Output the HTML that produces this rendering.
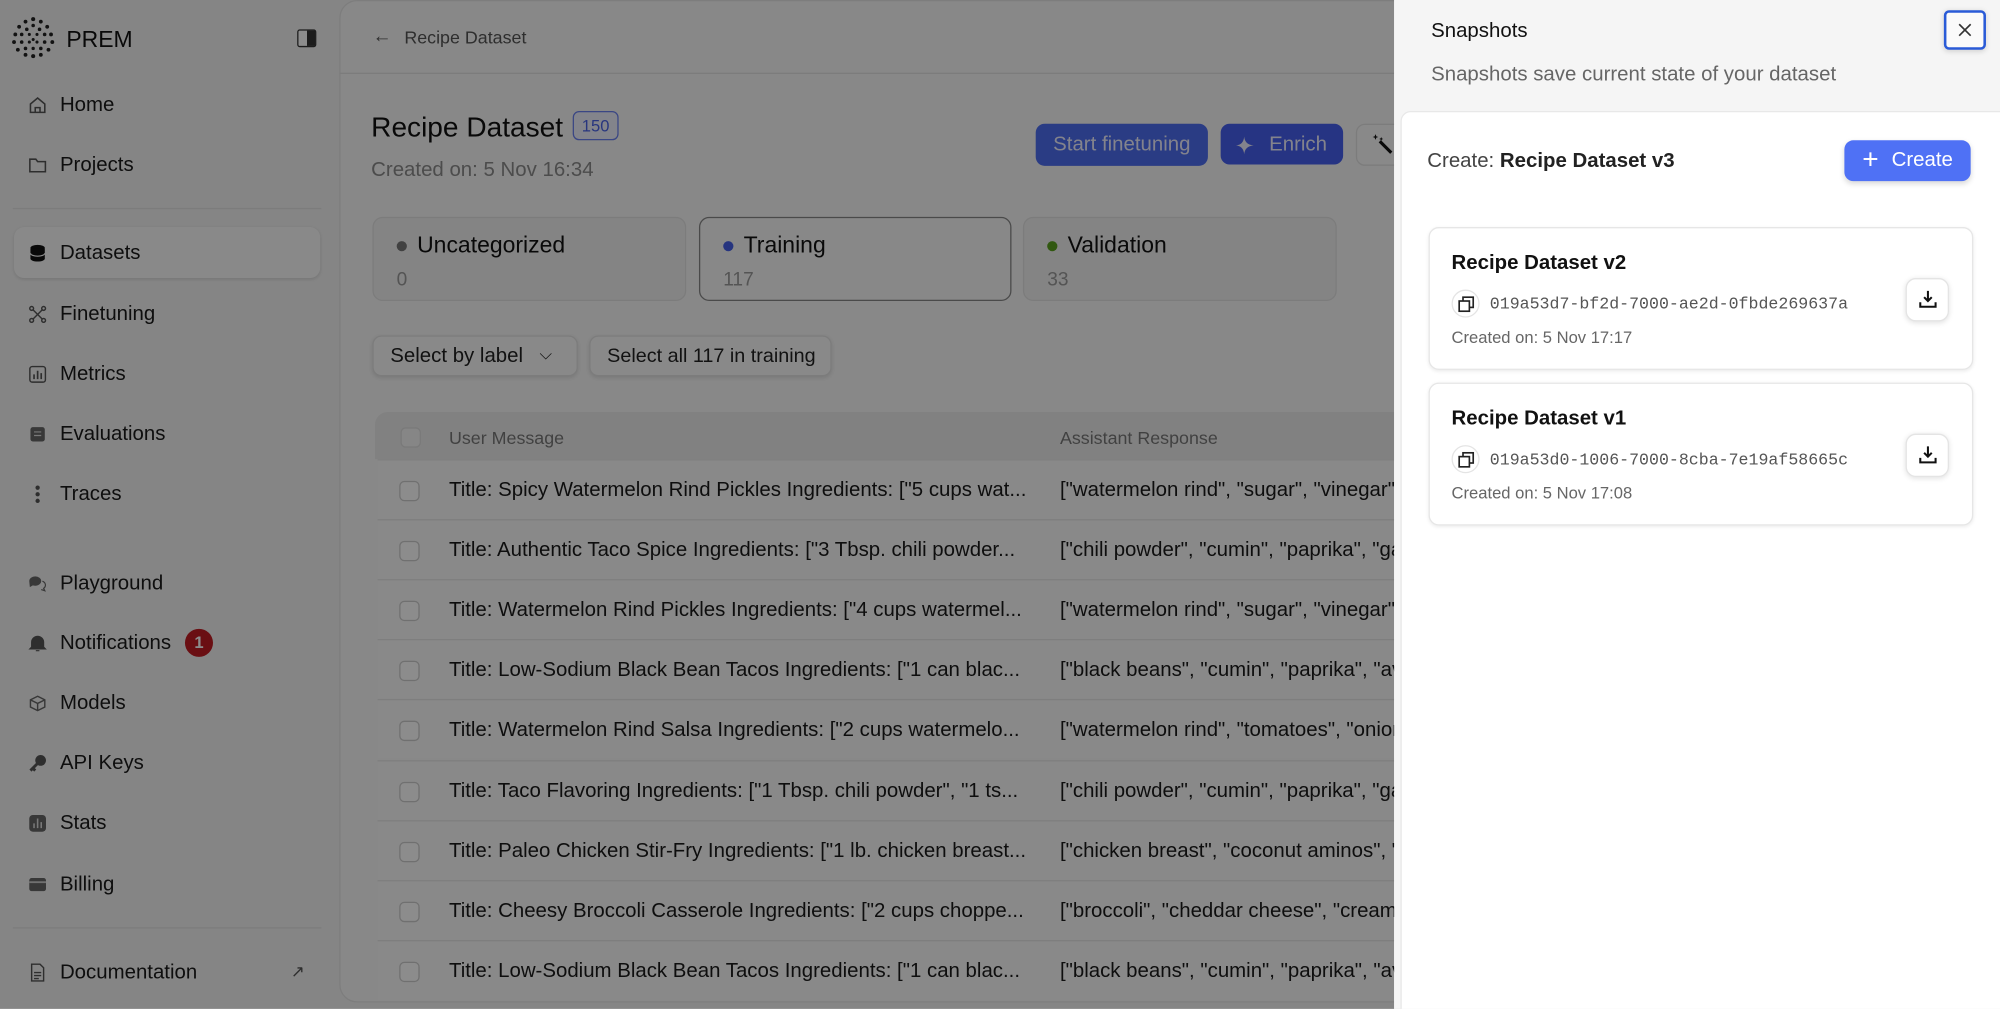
<!DOCTYPE html>
<html><head><meta charset="utf-8"><style>
*{box-sizing:border-box;margin:0;padding:0}
html,body{width:2000px;height:1009px;overflow:hidden;background:#7c7c7c}
#w{position:absolute;left:0;top:0;width:1568px;height:791px;transform:scale(1.27551);transform-origin:0 0;font-family:"Liberation Sans",sans-serif;background:#f3f3f3;overflow:hidden}
.a{position:absolute;white-space:nowrap}
.nav{position:absolute;left:47px;font-size:16px;color:#1a1a1a;margin-top:2px}
.ic{position:absolute;left:22px;width:15px;height:15px;margin-top:2px}
.main{position:absolute;left:266px;top:0;width:1400px;height:786px;background:#f7f7f7;border:1px solid #e4e4e4;border-radius:14px}
.card{position:absolute;top:170px;height:66px;border:1px solid #e2e2e2;border-radius:8px;background:#f0f0f0}
.card .t{position:absolute;left:34px;top:11px;font-size:18px;color:#111}
.card .n{position:absolute;left:18px;top:40px;font-size:15px;color:#999}
.card .d{position:absolute;left:18px;top:18px;width:8px;height:8px;border-radius:50%}
.btn{position:absolute;top:263px;height:32px;border:1px solid #e2e2e2;border-radius:7px;background:#fafafa;font-size:16px;color:#222;padding:7px 13px;box-shadow:0 1px 3px rgba(0,0,0,.1);white-space:nowrap}
.row{position:absolute;left:296px;width:1000px;height:47px;border-top:1px solid #e6e6e6;background:#f9f9f9}
.row .cb,.hd .cb{position:absolute;left:17px;top:16px;width:16px;height:16px;border:1px solid #ccc;border-radius:4px;background:#fff}
.row .u{position:absolute;left:56px;top:15px;font-size:16px;color:#1a1a1a;white-space:nowrap}
.row .r{position:absolute;left:535px;top:15px;font-size:16px;color:#1a1a1a;white-space:nowrap}
#ov{position:absolute;left:0;top:0;width:1093px;height:791px;background:rgba(0,0,0,.45)}
#p{position:absolute;left:1093px;top:0;width:475px;height:791px;background:#f5f5f5}
#in{position:absolute;left:5px;top:87px;width:480px;height:720px;background:#fff;border:1px solid #e8e8e8;border-radius:8px}
.sc{position:absolute;left:21px;width:427px;height:112px;border:1px solid #e6e6e6;border-radius:8px;background:#fff;box-shadow:0 1px 3px rgba(0,0,0,.08)}
.sc .t{position:absolute;left:17px;top:19px;font-size:16px;font-weight:bold;color:#111}
.sc .cp{position:absolute;left:17px;top:48px;width:22px;height:22px;border:1px solid #e4e4e4;border-radius:50%}
.sc .id{position:absolute;left:47px;top:52px;font-family:"Liberation Mono",monospace;font-size:13px;color:#555}
.sc .c{position:absolute;left:17px;top:78px;font-size:13px;color:#666}
.sc .dl{position:absolute;left:373px;top:39px;width:34px;height:34px;border:1px solid #e4e4e4;border-radius:8px;box-shadow:0 1px 4px rgba(0,0,0,.12);background:#fff}
</style></head><body><div id="w">
<svg class="a" style="left:9px;top:13px" width="34" height="34" viewBox="0 0 34 34"><g fill="#222">
<circle cx="17" cy="2" r="1.6"/><circle cx="11" cy="4" r="1.5"/><circle cx="23" cy="4" r="1.5"/><circle cx="6" cy="8" r="1.5"/><circle cx="28" cy="8" r="1.5"/><circle cx="17" cy="7" r="1.4"/><circle cx="12" cy="10" r="1.4"/><circle cx="22" cy="10" r="1.4"/><circle cx="3" cy="14" r="1.5"/><circle cx="31" cy="14" r="1.5"/><circle cx="8" cy="14" r="1.4"/><circle cx="26" cy="14" r="1.4"/><circle cx="14" cy="14" r="1.2"/><circle cx="20" cy="14" r="1.2"/><circle cx="2" cy="20" r="1.5"/><circle cx="32" cy="20" r="1.5"/><circle cx="8" cy="20" r="1.4"/><circle cx="26" cy="20" r="1.4"/><circle cx="14" cy="20" r="1.2"/><circle cx="20" cy="20" r="1.2"/><circle cx="5" cy="26" r="1.5"/><circle cx="29" cy="26" r="1.5"/><circle cx="11" cy="25" r="1.4"/><circle cx="23" cy="25" r="1.4"/><circle cx="17" cy="25" r="1.3"/><circle cx="11" cy="30" r="1.5"/><circle cx="23" cy="30" r="1.5"/><circle cx="17" cy="31" r="1.6"/><circle cx="17" cy="18" r="1.2"/></g></svg>
<div class="a" style="left:52px;top:21px;font-size:18px;color:#111">PREM</div>
<div class="a" style="left:233px;top:23px;width:15px;height:14px;border:1.5px solid #333;border-radius:2px;background:linear-gradient(90deg,#fff 50%,#333 50%)"></div>
<svg class="ic" style="top:73px" viewBox="0 0 16 16"><path d="M2 7L8 2l6 5v7H2z M6 14V10h4v4" fill="none" stroke="#555" stroke-width="1.3"/></svg><div class="nav" style="top:72px">Home</div>
<svg class="ic" style="top:120px" viewBox="0 0 16 16"><path d="M1.5 3h5l1.5 2h6.5v8.5h-13z" fill="none" stroke="#555" stroke-width="1.3"/></svg><div class="nav" style="top:119px">Projects</div>
<div class="a" style="left:10px;top:163px;width:242px;height:1px;background:#e2e2e2"></div>
<div class="a" style="left:11px;top:178px;width:240px;height:40px;background:#fafafa;border-radius:8px;box-shadow:0 1px 3px rgba(0,0,0,.12)"></div>
<svg class="ic" style="top:189px" viewBox="0 0 16 16"><ellipse cx="8" cy="3.5" rx="6" ry="2.5" fill="#111"/><path d="M2 4v8.5c0 1.4 2.7 2.5 6 2.5s6-1.1 6-2.5V4" fill="#111"/><path d="M2 8c0 1.4 2.7 2.5 6 2.5S14 9.4 14 8" stroke="#fff" fill="none"/></svg><div class="nav" style="top:188px">Datasets</div>
<svg class="ic" style="top:237px" viewBox="0 0 16 16"><g fill="none" stroke="#555" stroke-width="1.2"><circle cx="3" cy="3" r="1.6"/><circle cx="13" cy="3" r="1.6"/><circle cx="3" cy="13" r="1.6"/><circle cx="13" cy="13" r="1.6"/><path d="M4 4l8 8M12 4l-8 8"/></g></svg><div class="nav" style="top:236px">Finetuning</div>
<svg class="ic" style="top:284px" viewBox="0 0 16 16"><rect x="1.5" y="1.5" width="13" height="13" rx="2" fill="none" stroke="#555" stroke-width="1.2"/><path d="M5 12V8M8 12V5M11 12V7" stroke="#555" stroke-width="1.4"/></svg><div class="nav" style="top:283px">Metrics</div>
<svg class="ic" style="top:331px" viewBox="0 0 16 16"><rect x="2" y="2" width="12" height="12" rx="2" fill="#666"/><path d="M5 6h6M5 9h6" stroke="#ddd"/></svg><div class="nav" style="top:330px">Evaluations</div>
<svg class="ic" style="top:378px" viewBox="0 0 16 16"><circle cx="8" cy="2.5" r="1.8" fill="#555"/><circle cx="8" cy="8" r="1.8" fill="#555"/><circle cx="8" cy="13.5" r="1.8" fill="#555"/></svg><div class="nav" style="top:377px">Traces</div>
<svg class="ic" style="top:448px" viewBox="0 0 16 16"><path d="M1 6a5 4 0 0 1 10 0a5 4 0 0 1-7 3.5L1.5 11z" fill="#666"/><path d="M12 6a4 3.5 0 0 1 1 6l1 2-3-1" fill="none" stroke="#666"/></svg><div class="nav" style="top:447px">Playground</div>
<svg class="ic" style="top:495px" viewBox="0 0 16 16"><path d="M3 11V7a5 5 0 0 1 10 0v4l1.5 1.5h-13z M6.5 14h3" fill="#555" stroke="#555"/></svg><div class="nav" style="top:494px">Notifications</div>
<div class="a" style="left:145px;top:493px;width:22px;height:22px;border-radius:50%;background:#c21d24;color:#fff;font-size:13px;font-weight:bold;text-align:center;line-height:22px">1</div>
<svg class="ic" style="top:542px" viewBox="0 0 16 16"><path d="M8 2l6 3v6l-6 3-6-3V5z M2 5l6 3 6-3M8 8v6" fill="none" stroke="#666" stroke-width="1.2"/></svg><div class="nav" style="top:541px">Models</div>
<svg class="ic" style="top:589px" viewBox="0 0 16 16"><circle cx="10.5" cy="5.5" r="4.5" fill="#555"/><path d="M8 8l-6 6M4 12l2 2" stroke="#555" stroke-width="2.4"/></svg><div class="nav" style="top:588px">API Keys</div>
<svg class="ic" style="top:636px" viewBox="0 0 16 16"><rect x="1" y="1" width="14" height="14" rx="3" fill="#666"/><path d="M5 12V8M8 12V4M11 12V7" stroke="#ddd" stroke-width="1.3"/></svg><div class="nav" style="top:635px">Stats</div>
<svg class="ic" style="top:684px" viewBox="0 0 16 16"><rect x="1" y="2.5" width="14" height="11" rx="2" fill="#666"/><path d="M1 6h14" stroke="#ccc" stroke-width="1.5"/></svg><div class="nav" style="top:683px">Billing</div>
<div class="a" style="left:10px;top:727px;width:242px;height:1px;background:#e2e2e2"></div>
<svg class="ic" style="top:753px" viewBox="0 0 16 16"><path d="M3 1h7l3 3v11H3z M5 8h6M5 10.5h6M5 13h4" fill="none" stroke="#555" stroke-width="1.2"/></svg><div class="nav" style="top:752px">Documentation</div>
<div class="a" style="left:228px;top:754px;font-size:13px;color:#555">↗</div>
<div class="main"></div>
<div class="a" style="left:266px;top:57px;width:1000px;height:1px;background:#e2e2e2"></div>
<div class="a" style="left:292px;top:20px;font-size:15px;color:#555">←</div>
<div class="a" style="left:317px;top:21px;font-size:14px;color:#555">Recipe Dataset</div>
<div class="a" style="left:291px;top:87px;font-size:22px;color:#111">Recipe Dataset</div>
<div class="a" style="left:449px;top:87px;width:36px;height:23px;border:1px solid #6b80f0;border-radius:5px;background:#eef1fe;color:#4a63e6;font-size:13px;text-align:center;line-height:21px">150</div>
<div class="a" style="left:291px;top:125px;font-size:16px;color:#8a8a8a">Created on: 5 Nov 16:34</div>
<div class="a" style="left:812px;top:97px;width:135px;height:33px;border-radius:7px;background:#4d6df0;color:#eef;font-size:16px;text-align:center;line-height:33px">Start finetuning</div>
<div class="a" style="left:957px;top:97px;width:96px;height:32px;border-radius:7px;background:#4660ef;color:#eef;font-size:16px;line-height:33px;padding-left:38px">Enrich</div>
<svg class="a" style="left:968px;top:105px" width="17" height="17" viewBox="0 0 16 16"><path d="M7 2Q7.5 8 14 8.5Q7.5 9 7 15Q6.5 9 1 8.5Q6.5 8 7 2z" fill="#eef"/></svg>
<div class="a" style="left:1063px;top:97px;width:40px;height:33px;border-radius:7px;background:#fafafa;border:1px solid #e2e2e2"></div>
<svg class="a" style="left:1075px;top:104px" width="18" height="18" viewBox="0 0 16 16"><path d="M6 6l8 8" stroke="#111" stroke-width="2.2"/><path d="M3 1l.6 1.6L5 3l-1.4.5L3 5l-.6-1.5L1 3l1.4-.4z M7 3l.4 1 1 .4-1 .4L7 6l-.4-1.2-1-.4 1-.4z" fill="#111"/></svg>
<div class="card" style="left:292px;width:246px"><div class="d" style="background:#777"></div><div class="t">Uncategorized</div><div class="n">0</div></div>
<div class="card" style="left:548px;width:245px;border:1.5px solid #888;background:#f8f8f8"><div class="d" style="background:#4560e8"></div><div class="t">Training</div><div class="n">117</div></div>
<div class="card" style="left:802px;width:246px"><div class="d" style="background:#5aa01e"></div><div class="t">Validation</div><div class="n">33</div></div>
<div class="btn" style="left:292px;width:161px">Select by label <span style="position:absolute;left:130px;top:6px;font-size:13px">⌵</span></div>
<div class="btn" style="left:462px;width:190px;font-size:15.5px">Select all 117 in training</div>
<div class="a hd" style="left:294px;top:323px;width:1000px;height:37px;background:#ececec;border-radius:10px 0 0 0"><div class="cb" style="left:20px;top:12px;background:#f4f4f4;border-color:#ddd"></div><div class="a" style="left:58px;top:12px;font-size:14px;color:#777">User Message</div><div class="a" style="left:537px;top:12px;font-size:14px;color:#777">Assistant Response</div></div>
<div class="row" style="top:360px"><div class="cb"></div><div class="u">Title: Spicy Watermelon Rind Pickles Ingredients: ["5 cups wat...</div><div class="r">["watermelon rind", "sugar", "vinegar", "</div></div>
<div class="row" style="top:407px"><div class="cb"></div><div class="u">Title: Authentic Taco Spice Ingredients: ["3 Tbsp. chili powder...</div><div class="r">["chili powder", "cumin", "paprika", "garlic</div></div>
<div class="row" style="top:454px"><div class="cb"></div><div class="u">Title: Watermelon Rind Pickles Ingredients: ["4 cups watermel...</div><div class="r">["watermelon rind", "sugar", "vinegar", "</div></div>
<div class="row" style="top:501px"><div class="cb"></div><div class="u">Title: Low-Sodium Black Bean Tacos Ingredients: ["1 can blac...</div><div class="r">["black beans", "cumin", "paprika", "avoc</div></div>
<div class="row" style="top:548px"><div class="cb"></div><div class="u">Title: Watermelon Rind Salsa Ingredients: ["2 cups watermelo...</div><div class="r">["watermelon rind", "tomatoes", "onion"</div></div>
<div class="row" style="top:596px"><div class="cb"></div><div class="u">Title: Taco Flavoring Ingredients: ["1 Tbsp. chili powder", "1 ts...</div><div class="r">["chili powder", "cumin", "paprika", "garlic</div></div>
<div class="row" style="top:643px"><div class="cb"></div><div class="u">Title: Paleo Chicken Stir-Fry Ingredients: ["1 lb. chicken breast...</div><div class="r">["chicken breast", "coconut aminos", "br</div></div>
<div class="row" style="top:690px"><div class="cb"></div><div class="u">Title: Cheesy Broccoli Casserole Ingredients: ["2 cups choppe...</div><div class="r">["broccoli", "cheddar cheese", "cream</div></div>
<div class="row" style="top:737px"><div class="cb"></div><div class="u">Title: Low-Sodium Black Bean Tacos Ingredients: ["1 can blac...</div><div class="r">["black beans", "cumin", "paprika", "avoc</div></div>
<div id="ov"></div>
<div id="p">
<div class="a" style="left:29px;top:16px;font-size:16px;color:#111">Snapshots</div>
<div class="a" style="left:431px;top:8px;width:33px;height:31px;border:2px solid #2a5bd7;border-radius:4px;background:#fafafa;box-shadow:0 1px 4px rgba(0,0,0,.15)"><svg style="position:absolute;left:9px;top:8px" width="11" height="11" viewBox="0 0 11 11"><path d="M1 1l9 9M10 1l-9 9" stroke="#333" stroke-width="1.3"/></svg></div>
<div class="a" style="left:29px;top:50px;font-size:16px;color:#666">Snapshots save current state of your dataset</div>
<div id="in">
<div class="a" style="left:20px;top:30px;font-size:16px;color:#444">Create: <b style="color:#222">Recipe Dataset v3</b></div>
<div class="a" style="left:347px;top:22px;width:99px;height:32px;border-radius:7px;background:#4f71f5;color:#fff;font-size:16px;line-height:32px;padding-left:37px;box-shadow:0 2px 4px rgba(0,0,0,.15)"><span style="position:absolute;left:14px;top:-1px;font-size:22px;font-weight:200">+</span>Create</div>
<div class="sc" style="top:90px"><div class="t">Recipe Dataset v2</div><div class="cp"><svg style="position:absolute;left:4px;top:4px" width="13" height="13" viewBox="0 0 13 13"><rect x="4" y="1" width="8" height="8" fill="none" stroke="#222" stroke-width="1.3"/><rect x="1" y="4" width="8" height="8" fill="#fff" stroke="#222" stroke-width="1.3"/></svg></div><div class="id">019a53d7-bf2d-7000-ae2d-0fbde269637a</div><div class="c">Created on: 5 Nov 17:17</div><div class="dl"><svg style="position:absolute;left:9px;top:8px" width="15" height="15" viewBox="0 0 15 15"><path d="M7.5 1v8M4.5 6l3 3 3-3M1.5 10v3.5h12V10" fill="none" stroke="#111" stroke-width="1.6"/></svg></div></div>
<div class="sc" style="top:212px"><div class="t">Recipe Dataset v1</div><div class="cp"><svg style="position:absolute;left:4px;top:4px" width="13" height="13" viewBox="0 0 13 13"><rect x="4" y="1" width="8" height="8" fill="none" stroke="#222" stroke-width="1.3"/><rect x="1" y="4" width="8" height="8" fill="#fff" stroke="#222" stroke-width="1.3"/></svg></div><div class="id">019a53d0-1006-7000-8cba-7e19af58665c</div><div class="c">Created on: 5 Nov 17:08</div><div class="dl"><svg style="position:absolute;left:9px;top:8px" width="15" height="15" viewBox="0 0 15 15"><path d="M7.5 1v8M4.5 6l3 3 3-3M1.5 10v3.5h12V10" fill="none" stroke="#111" stroke-width="1.6"/></svg></div></div>
</div>
</div>
</div></body></html>
